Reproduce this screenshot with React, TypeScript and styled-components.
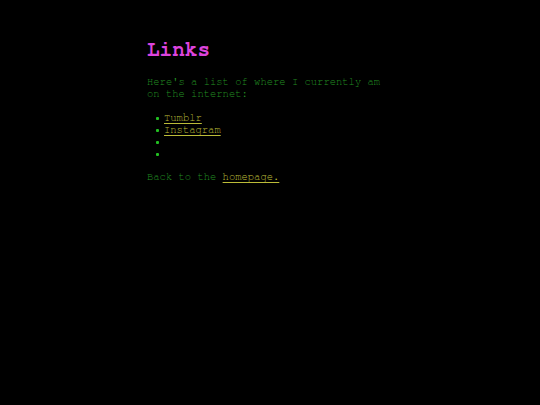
import styled, { createGlobalStyle } from 'styled-components';
import React from 'react';

const GlobalStyle = createGlobalStyle`
  html, body {
    margin: 0;
    padding: 0;
    background-color: #000000;
  }
  body {
    font-family: "Nimbus Mono PS", "Nimbus Mono L", "FreeMono", "Courier", "Liberation Mono", monospace;
    font-size: 10.5px;
    line-height: 12px;
    color: #228f22;
  }
`;

const Page = styled.div`
  width: 246px;
  margin: 0 auto;
  padding-top: 38px;
`;

const Title = styled.h1`
  margin: 0 0 14px 0;
  font-size: 21px;
  line-height: 24px;
  font-weight: bold;
  color: #dd44dd;
`;

const Text = styled.p`
  margin: 0 0 12px 0;
`;

const List = styled.ul`
  margin: 0 0 11px 0;
  padding-left: 17px;
  list-style: none;
`;

const Item = styled.li`
  position: relative;
  height: 12px;
  &:before {
    content: '';
    position: absolute;
    left: -8px;
    top: 5px;
    width: 3px;
    height: 3px;
    border-radius: 1px;
    background-color: #22c022;
  }
`;

const Link = styled.a`
  color: #bcbc38;
  text-decoration: underline;
  text-underline-offset: 2px;
`;

export default function App() {
  return (
    <>
      <GlobalStyle />
      <Page>
        <Title>Links</Title>
        <Text>Here's a list of where I currently am on the internet:</Text>
        <List>
          <Item><Link href="#">Tumblr</Link></Item>
          <Item><Link href="#">Instagram</Link></Item>
          <Item />
          <Item />
        </List>
        <Text>
          Back to the <Link href="#">homepage.</Link>
        </Text>
      </Page>
    </>
  );
}
